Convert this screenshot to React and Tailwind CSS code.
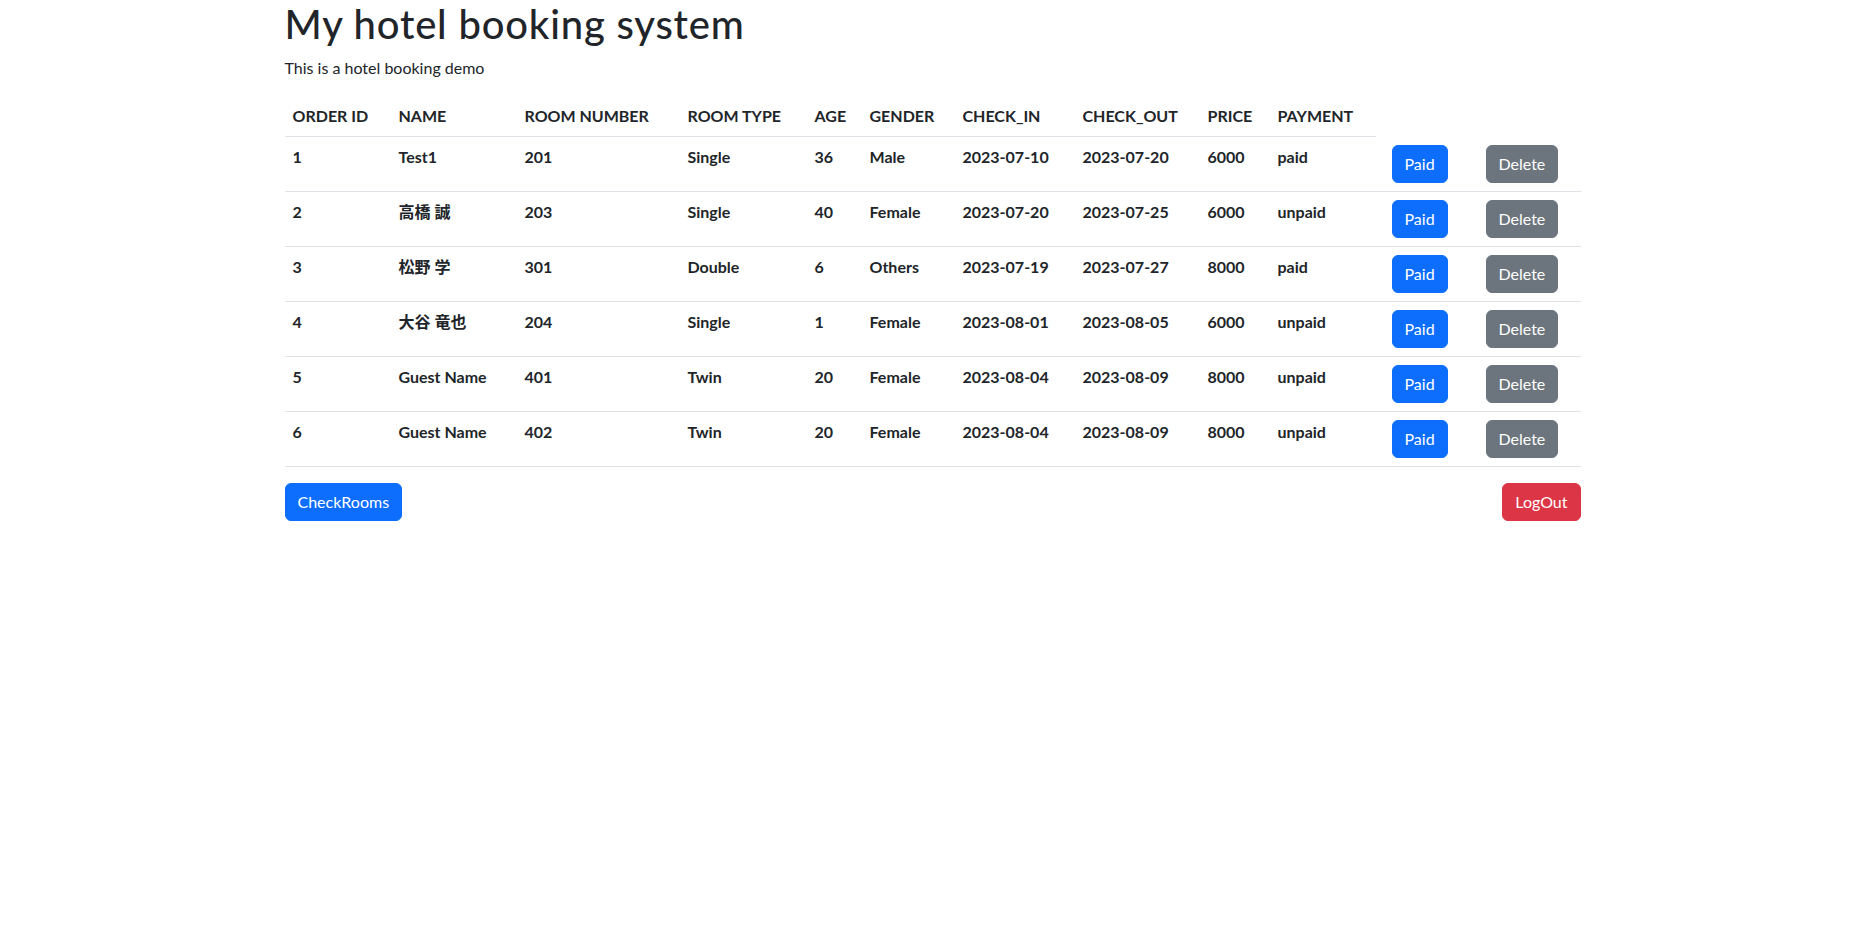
import React from 'react';

const rows = [
  { id: 1, name: 'Test1', room: '201', type: 'Single', age: '36', gender: 'Male', inD: '2023-07-10', outD: '2023-07-20', price: '6000', pay: 'paid' },
  { id: 2, name: '高橋 誠', room: '203', type: 'Single', age: '40', gender: 'Female', inD: '2023-07-20', outD: '2023-07-25', price: '6000', pay: 'unpaid' },
  { id: 3, name: '松野 学', room: '301', type: 'Double', age: '6', gender: 'Others', inD: '2023-07-19', outD: '2023-07-27', price: '8000', pay: 'paid' },
  { id: 4, name: '大谷 竜也', room: '204', type: 'Single', age: '1', gender: 'Female', inD: '2023-08-01', outD: '2023-08-05', price: '6000', pay: 'unpaid' },
  { id: 5, name: 'Guest Name', room: '401', type: 'Twin', age: '20', gender: 'Female', inD: '2023-08-04', outD: '2023-08-09', price: '8000', pay: 'unpaid' },
  { id: 6, name: 'Guest Name', room: '402', type: 'Twin', age: '20', gender: 'Female', inD: '2023-08-04', outD: '2023-08-09', price: '8000', pay: 'unpaid' },
];

const headers = ['ORDER ID', 'NAME', 'ROOM NUMBER', 'ROOM TYPE', 'AGE', 'GENDER', 'CHECK_IN', 'CHECK_OUT', 'PRICE', 'PAYMENT'];
const widths = ['w-[106px]', 'w-[126px]', 'w-[163px]', 'w-[127px]', 'w-[55px]', 'w-[93px]', 'w-[120px]', 'w-[125px]', 'w-[70px]', 'w-[106px]', 'w-[102px]', 'w-[103px]'];

const td = 'p-2 border-b border-[#dee2e6] align-top';

export default function App() {
  return (
    <div className="min-h-screen bg-white text-[#212529] font-['Lato','Noto_Sans_CJK_JP',sans-serif] text-base leading-6">
      <div className="w-[1320px] mx-auto px-3">
        <h1 className="text-[40px] leading-[1.2] font-medium tracking-[0.8px] mb-2">My hotel booking system</h1>
        <p className="mb-4">This is a hotel booking demo</p>
        <table className="w-full table-fixed mb-4">
          <colgroup>
            {widths.map((w, i) => <col key={i} className={w} />)}
          </colgroup>
          <thead>
            <tr>
              {headers.map(h => (
                <th key={h} className="p-2 text-left font-bold border-b border-[#dee2e6]">{h}</th>
              ))}
            </tr>
          </thead>
          <tbody>
            {rows.map(r => (
              <tr key={r.id} className="font-bold">
                <td className={td}>{r.id}</td>
                <td className={td}>{r.name}</td>
                <td className={td}>{r.room}</td>
                <td className={td}>{r.type}</td>
                <td className={td}>{r.age}</td>
                <td className={td}>{r.gender}</td>
                <td className={td}>{r.inD}</td>
                <td className={td}>{r.outD}</td>
                <td className={td}>{r.price}</td>
                <td className={td}>{r.pay}</td>
                <td className={td + ' pl-4'}>
                  <button className="bg-[#0d6efd] text-white font-normal px-3 py-1.5 rounded-md border border-[#0d6efd]">Paid</button>
                </td>
                <td className={td}>
                  <button className="bg-[#6c757d] text-white font-normal px-3 py-1.5 rounded-md border border-[#6c757d]">Delete</button>
                </td>
              </tr>
            ))}
          </tbody>
        </table>
        <div className="flex justify-between">
          <button className="bg-[#0d6efd] text-white px-3 py-1.5 rounded-md border border-[#0d6efd]">CheckRooms</button>
          <button className="bg-[#dc3545] text-white px-3 py-1.5 rounded-md border border-[#dc3545]">LogOut</button>
        </div>
      </div>
    </div>
  );
}
